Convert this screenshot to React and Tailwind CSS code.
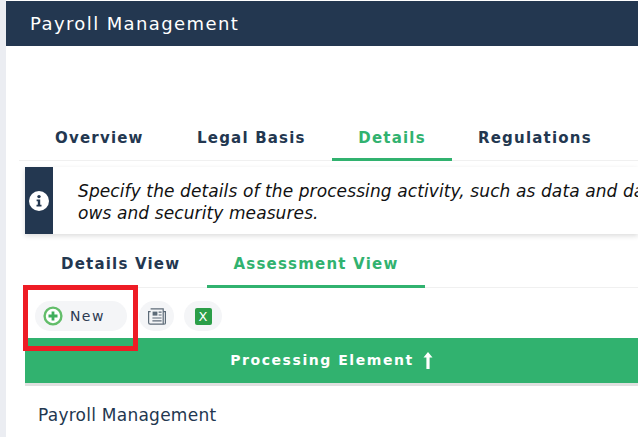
import React from "react";

function PlusCircle() {
  return (
    <svg width="20" height="20" viewBox="0 0 20 20" className="shrink-0">
      <circle cx="10" cy="10" r="8.4" fill="#fff" stroke="#62bd6a" strokeWidth="2.4" />
      <path d="M10 5.5v9M5.5 10h9" stroke="#3fae5c" strokeWidth="2.8" />
    </svg>
  );
}

function News() {
  return (
    <svg width="18" height="17" viewBox="0 0 18 17" fill="none" stroke="#5d6b78" strokeWidth="1.2">
      <path d="M2.6 .8h12.6v14.2a1.2 1.2 0 0 0 1.2 1.2H2.2A1.6 1.6 0 0 1 .6 14.6V3.6h2" />
      <path d="M15.2 3.6h2.2v11.4a1.2 1.2 0 0 1-1 1.2" />
      <rect x="4.6" y="3.6" width="4.8" height="4" fill="#5d6b78" stroke="none" />
      <path d="M10.6 4.2h3M10.6 7h3M4.4 10h9.2M4.4 12.8h9.2" />
    </svg>
  );
}

export default function App() {
  return (
    <div className="relative w-[638px] h-[437px] overflow-hidden bg-white flex font-['DejaVu_Sans',sans-serif]">
      <div className="w-[6px] shrink-0 bg-[#ebedf2]" />
      <div className="flex-1 min-w-0 flex flex-col">
        <div className="mt-px h-[45px] shrink-0 bg-[#233750] flex items-center pl-[24px] text-[18px] tracking-[1.4px] text-white">
          Payroll Management
        </div>

        <div className="mt-[68px] ml-[13px] h-[47px] shrink-0 flex border-b border-[#f0f0f0] font-bold text-[15px] tracking-[1.2px] text-[#233750]">
          <div className="w-[124px] pl-[36px] pt-[13px]">Overview</div>
          <div className="w-[189px] pl-[54px] pt-[13px]">Legal Basis</div>
          <div className="w-[120px] pt-[13px] text-center text-[#31b26f] border-b-[3px] border-[#31b26f] h-[47px]">Details</div>
          <div className="pl-[26px] pt-[13px] whitespace-nowrap">Regulations</div>
        </div>

        <div className="mt-[6px] ml-[19px] h-[67px] shrink-0 flex overflow-hidden shadow-[0_2px_5px_rgba(0,0,0,0.14)]">
          <div className="w-[28px] shrink-0 bg-[#233750] flex items-center justify-center pt-[1px]">
            <svg width="20" height="20" viewBox="0 0 20 20">
              <circle cx="10" cy="10" r="10" fill="#fff" />
              <circle cx="10" cy="5.6" r="1.7" fill="#233750" />
              <path d="M7.6 8.6h3.6v5.2h1.3v1.7H7.5v-1.7h1.3v-3.5H7.6z" fill="#233750" />
            </svg>
          </div>
          <p className="pl-[25px] pt-[13px] whitespace-nowrap italic text-[17px] tracking-[0.1px] leading-[22px] text-[#111]">
            Specify the details of the processing activity, such as data and data fl
            <br />
            ows and security measures.
          </p>
        </div>

        <div className="mt-[8px] ml-[19px] h-[46px] shrink-0 flex border-b border-[#f0f0f0] font-bold text-[15px] tracking-[1.2px] text-[#233750]">
          <div className="w-[182px] pl-[36px] pt-[11px]">Details View</div>
          <div className="w-[218px] h-[46px] pt-[11px] text-center text-[#31b26f] border-b-[3px] border-[#31b26f]">Assessment View</div>
        </div>

        <div className="mt-[13px] ml-[29px] flex shrink-0 items-center">
          <div className="w-[92px] h-[30px] rounded-full bg-[#f4f5f7] flex items-center pl-[8px] gap-[7px] text-[14px] tracking-[1.4px] text-[#2b3a52]">
            <PlusCircle />
            New
          </div>
          <div className="ml-[12px] w-[35px] h-[30px] rounded-full bg-[#f4f5f7] flex items-center justify-center">
            <News />
          </div>
          <div className="ml-[10px] w-[38px] h-[30px] rounded-full bg-[#f4f5f7] flex items-center justify-center">
            <div className="w-[17px] h-[17px] rounded-[2px] bg-[#2b9e48] flex items-center justify-center text-white text-[13px] leading-none">X</div>
          </div>
        </div>

        <div className="mt-[7px] ml-[19px] h-[48px] shrink-0 bg-[#31b26f] border-b-[3px] border-[#e0e0e0] flex items-center justify-center gap-[9px] font-bold text-[14px] tracking-[1.55px] text-white box-border">
          <span>Processing Element</span>
          <svg width="10" height="17" viewBox="0 0 10 17" fill="#fff"><path d="M5 0 9.5 5.5H6.6V17H3.4V5.5H.5z" /></svg>
        </div>

        <div className="mt-[17px] ml-[32px] text-[17px] tracking-[0.25px] text-[#233750] whitespace-nowrap">Payroll Management</div>
      </div>

      <div className="absolute left-[23px] top-[285px] w-[115px] h-[66px] border-[5px] border-[#ee1c25]" />
    </div>
  );
}
